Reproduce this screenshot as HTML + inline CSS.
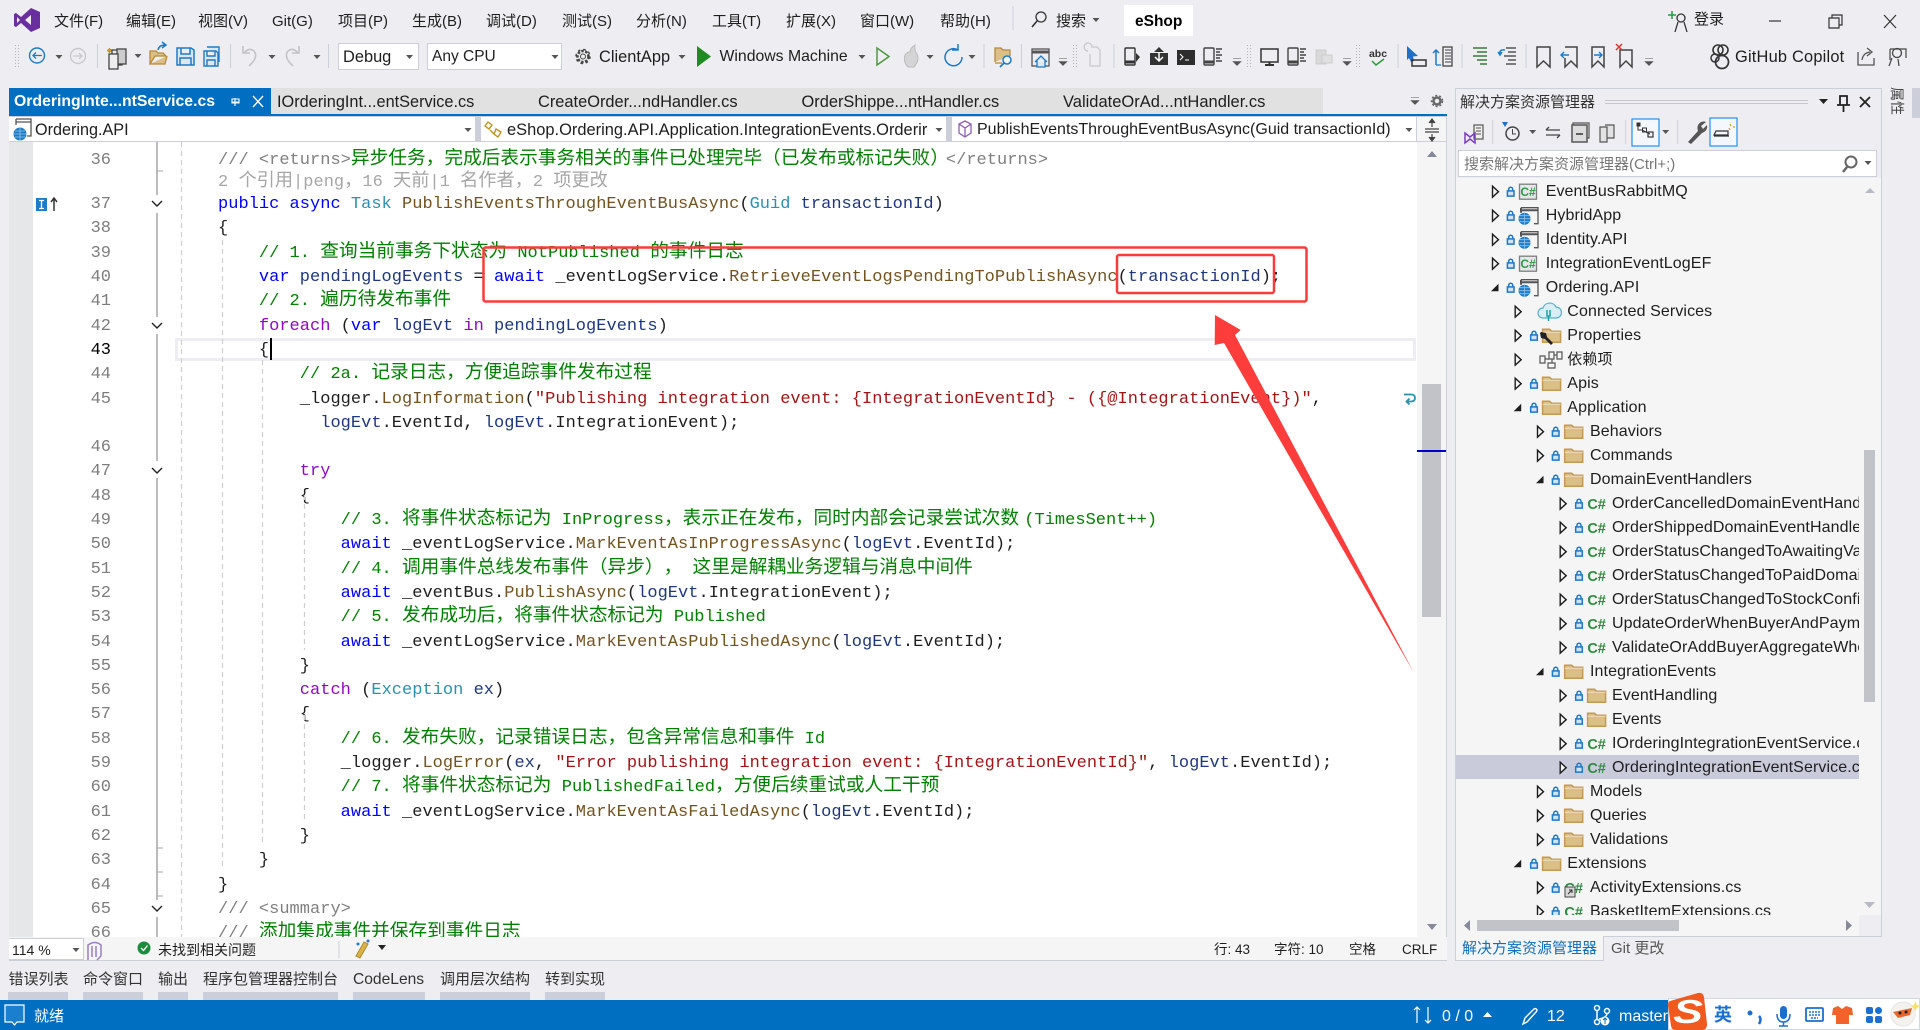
<!DOCTYPE html>
<html lang="zh"><head><meta charset="utf-8"><title>eShop - Visual Studio</title>
<style>
html,body{margin:0;padding:0;background:#eeeef2;width:1920px;height:1030px;overflow:hidden}
body{position:relative;font-family:"Liberation Sans","Noto Sans CJK SC",sans-serif;color:#1e1e1e;font-size:15px}
div{position:absolute;white-space:pre;box-sizing:border-box}
.t{line-height:24px;height:24px;margin-top:1px}
.lat{font-size:16.4px}
.bx{background:#fff;border:1px solid #ccced9}
.l{left:218px;height:24px;line-height:24px;margin-top:1.7px;font-family:"Liberation Mono","Noto Sans CJK SC",monospace;font-size:17px;letter-spacing:.02px;color:#1e1e1e;text-spacing-trim:space-all}
.n{left:70px;width:41px;text-align:right;height:24px;line-height:24px;margin-top:1.7px;font-family:"Liberation Mono",monospace;font-size:17px;color:#7d7d7d}
.l i{font-style:normal;font-family:"Noto Sans CJK SC",sans-serif;font-size:18.7px;line-height:0;letter-spacing:0;text-spacing-trim:space-all}
.e i{font-size:18.2px}
.g{color:#008000}.k{color:#0000ff}.p{color:#8f08c4}.y{color:#2b91af}.m{color:#74531f}.s{color:#a31515}.v{color:#1f377f}.d{color:#808080}.e{color:#a6a6a6}
.r{height:24px;line-height:24px;margin-top:.5px;font-size:16px;letter-spacing:.1px;color:#1e1e1e}
.b{background:#ccced9;top:992px;height:8px}
.w{color:#fff}
</style></head><body>

<!-- title + menu -->
<div class="t" style="left:54px;top:9px">文件(F)</div>
<div class="t" style="left:126px;top:9px">编辑(E)</div>
<div class="t" style="left:198px;top:9px">视图(V)</div>
<div class="t" style="left:272px;top:9px">Git(G)</div>
<div class="t" style="left:338px;top:9px">项目(P)</div>
<div class="t" style="left:412px;top:9px">生成(B)</div>
<div class="t" style="left:486px;top:9px">调试(D)</div>
<div class="t" style="left:562px;top:9px">测试(S)</div>
<div class="t" style="left:636px;top:9px">分析(N)</div>
<div class="t" style="left:712px;top:9px">工具(T)</div>
<div class="t" style="left:786px;top:9px">扩展(X)</div>
<div class="t" style="left:860px;top:9px">窗口(W)</div>
<div class="t" style="left:940px;top:9px">帮助(H)</div>
<div class="t" style="left:1056px;top:9px">搜索</div>
<div style="left:1124px;top:5px;width:69px;height:31px;background:#fff"></div>
<div class="t" style="left:1135px;top:9px;font-weight:bold;font-size:15.5px;color:#000">eShop</div>
<div class="t" style="left:1694px;top:7px">登录</div>

<!-- toolbar combos -->
<div class="bx" style="left:338px;top:43px;width:81px;height:27px"></div>
<div class="t lat" style="left:343px;top:44px">Debug</div>
<div class="bx" style="left:427px;top:43px;width:135px;height:27px"></div>
<div class="t" style="left:432px;top:44px;font-size:15.5px">Any CPU</div>
<div class="t lat" style="left:599px;top:44px">ClientApp</div>
<div class="t" style="left:719.5px;top:44px;font-size:15.8px">Windows Machine</div>
<div class="t lat" style="left:1735px;top:44px;letter-spacing:.2px">GitHub Copilot</div>

<!-- tabs -->
<div style="left:271px;top:88px;width:1052px;height:26px;background:#e1e1e1"></div>
<div style="left:9px;top:88px;width:262px;height:26px;background:#006fc1"></div>
<div style="left:9px;top:114px;width:1438px;height:2px;background:#006fc1"></div>
<div class="t w" style="left:14px;top:89px;font-weight:bold;font-size:15.8px">OrderingInte...ntService.cs</div>
<div class="t" style="left:277px;top:89px;font-size:16.3px">IOrderingInt...entService.cs</div>
<div class="t" style="left:538px;top:89px;font-size:16.4px">CreateOrder...ndHandler.cs</div>
<div class="t" style="left:801.5px;top:89px;font-size:16.4px">OrderShippe...ntHandler.cs</div>
<div class="t" style="left:1063px;top:89px;font-size:16.5px">ValidateOrAd...ntHandler.cs</div>

<!-- nav bar -->
<div style="left:9px;top:116px;width:1438px;height:26px;background:#ccced9"></div>
<div style="left:9px;top:117px;width:466px;height:24px;background:#fff"></div>
<div style="left:481px;top:117px;width:465px;height:24px;background:#fff"></div>
<div style="left:952px;top:117px;width:464px;height:24px;background:#fff"></div>
<div style="left:1417px;top:117px;width:30px;height:24px;background:#f5f5f5"></div>
<div class="t" style="left:35px;top:117px;font-size:16.2px">Ordering.API</div>
<div style="left:507px;top:118px;width:425px;height:24px;line-height:24px;overflow:hidden;font-size:16.45px">eShop.Ordering.API.Application.IntegrationEvents.Orderir</div>
<div class="t" style="left:977px;top:117px;font-size:16px">PublishEventsThroughEventBusAsync(Guid transactionId)</div>

<!-- editor -->
<div style="left:9px;top:142px;width:1408px;height:795px;background:#fff"></div>
<div style="left:9px;top:142px;width:24px;height:795px;background:#e6e7e8"></div>
<div style="left:1417px;top:142px;width:29px;height:795px;background:#f5f5f5"></div>
<div style="left:1446px;top:116px;width:1px;height:845px;background:#ccced9"></div>
<div style="left:1422px;top:384px;width:19px;height:233px;background:#c2c3c9"></div>
<div style="left:1417px;top:450px;width:29px;height:2px;background:#0000cd"></div>
<div style="left:175px;top:338px;width:1241px;height:23px;border:3px solid #eeeef2"></div>

<div style="left:0;top:0;width:1417px;height:937px;overflow:hidden">
<div class="n" style="top:147.3px">36</div>
<div class="n" style="top:191.5px">37</div>
<div class="n" style="top:215.8px">38</div>
<div class="n" style="top:240.1px">39</div>
<div class="n" style="top:264.4px">40</div>
<div class="n" style="top:288.7px">41</div>
<div class="n" style="top:313px">42</div>
<div class="n" style="top:337.3px;color:#000">43</div>
<div class="n" style="top:361.6px">44</div>
<div class="n" style="top:385.9px">45</div>
<div class="n" style="top:434.5px">46</div>
<div class="n" style="top:458.8px">47</div>
<div class="n" style="top:483.1px">48</div>
<div class="n" style="top:507.4px">49</div>
<div class="n" style="top:531.7px">50</div>
<div class="n" style="top:556px">51</div>
<div class="n" style="top:580.3px">52</div>
<div class="n" style="top:604.6px">53</div>
<div class="n" style="top:628.9px">54</div>
<div class="n" style="top:653.2px">55</div>
<div class="n" style="top:677.5px">56</div>
<div class="n" style="top:701.8px">57</div>
<div class="n" style="top:726.1px">58</div>
<div class="n" style="top:750.4px">59</div>
<div class="n" style="top:774.7px">60</div>
<div class="n" style="top:799px">61</div>
<div class="n" style="top:823.3px">62</div>
<div class="n" style="top:847.6px">63</div>
<div class="n" style="top:871.9px">64</div>
<div class="n" style="top:896.2px">65</div>
<div class="n" style="top:920.5px">66</div>

<div class="l" style="top:147.3px"><span class="d">/// &lt;returns&gt;</span><i class="g">异步任务，完成后表示事务相关的事件已处理完毕（已发布或标记失败）</i><span class="d" style="margin-left:-3px">&lt;/returns&gt;</span></div>
<div class="l e" style="top:169px">2 <i>个引用</i>|peng<i>，</i>16 <i>天前</i>|1 <i>名作者，</i>2 <i>项更改</i></div>
<div class="l" style="top:191.5px"><span class="k">public async </span><span class="y">Task </span><span class="m">PublishEventsThroughEventBusAsync</span>(<span class="y">Guid </span><span class="v">transactionId</span>)</div>
<div class="l" style="top:215.8px">{</div>
<div class="l g" style="top:240.1px">    // 1. <i>查询当前事务下状态为</i> NotPublished <i>的事件日志</i></div>
<div class="l" style="top:264.4px">    <span class="k">var </span><span class="v">pendingLogEvents</span> = <span class="k">await </span>_eventLogService.<span class="m">RetrieveEventLogsPendingToPublishAsync</span>(<span class="v">transactionId</span>);</div>
<div class="l g" style="top:288.7px">    // 2. <i>遍历待发布事件</i></div>
<div class="l" style="top:313px">    <span class="p">foreach </span>(<span class="k">var </span><span class="v">logEvt </span><span class="p">in </span><span class="v">pendingLogEvents</span>)</div>
<div class="l" style="top:337.3px">    {</div>
<div class="l g" style="top:361.6px">        // 2a. <i>记录日志，方便追踪事件发布过程</i></div>
<div class="l" style="top:385.9px">        _logger.<span class="m">LogInformation</span>(<span class="s">"Publishing integration event: {IntegrationEventId} - ({@IntegrationEvent})"</span>,</div>
<div class="l" style="top:410.2px">          <span class="v">logEvt</span>.EventId, <span class="v">logEvt</span>.IntegrationEvent);</div>
<div class="l" style="top:458.8px">        <span class="p">try</span></div>
<div class="l" style="top:483.1px">        {</div>
<div class="l g" style="top:507.4px">            // 3. <i>将事件状态标记为</i> InProgress<i>，表示正在发布，同时内部会记录尝试次数</i><span style="margin-left:-5px"> (TimesSent++)</span></div>
<div class="l" style="top:531.7px">            <span class="k">await </span>_eventLogService.<span class="m">MarkEventAsInProgressAsync</span>(<span class="v">logEvt</span>.EventId);</div>
<div class="l g" style="top:556px">            // 4. <i>调用事件总线发布事件（异步），</i> <i>这里是解耦业务逻辑与消息中间件</i></div>
<div class="l" style="top:580.3px">            <span class="k">await </span>_eventBus.<span class="m">PublishAsync</span>(<span class="v">logEvt</span>.IntegrationEvent);</div>
<div class="l g" style="top:604.6px">            // 5. <i>发布成功后，将事件状态标记为</i> Published</div>
<div class="l" style="top:628.9px">            <span class="k">await </span>_eventLogService.<span class="m">MarkEventAsPublishedAsync</span>(<span class="v">logEvt</span>.EventId);</div>
<div class="l" style="top:653.2px">        }</div>
<div class="l" style="top:677.5px">        <span class="p">catch </span>(<span class="y">Exception </span><span class="v">ex</span>)</div>
<div class="l" style="top:701.8px">        {</div>
<div class="l g" style="top:726.1px">            // 6. <i>发布失败，记录错误日志，包含异常信息和事件</i> Id</div>
<div class="l" style="top:750.4px">            _logger.<span class="m">LogError</span>(<span class="v">ex</span>, <span class="s">"Error publishing integration event: {IntegrationEventId}"</span>, <span class="v">logEvt</span>.EventId);</div>
<div class="l g" style="top:774.7px">            // 7. <i>将事件状态标记为</i> PublishedFailed<i>，方便后续重试或人工干预</i></div>
<div class="l" style="top:799px">            <span class="k">await </span>_eventLogService.<span class="m">MarkEventAsFailedAsync</span>(<span class="v">logEvt</span>.EventId);</div>
<div class="l" style="top:823.3px">        }</div>
<div class="l" style="top:847.6px">    }</div>
<div class="l" style="top:871.9px">}</div>
<div class="l d" style="top:896.2px">/// &lt;summary&gt;</div>
<div class="l" style="top:920.5px"><span class="d">/// </span><i class="g">添加集成事件并保存到事件日志</i></div>
</div>
<div style="left:270px;top:338px;width:1.5px;height:22px;background:#000"></div>

<!-- editor status -->
<div style="left:9px;top:937px;width:1438px;height:24px;background:#f5f5f5;border-bottom:1px solid #ccced9"></div>
<div style="left:9px;top:938px;width:75px;height:22px;background:#fff;border:1px solid #ccced9;border-left:0"></div>
<div class="t" style="left:12px;top:937px;font-size:14px">114 %</div>
<div class="t" style="left:158px;top:937px;font-size:14px">未找到相关问题</div>
<div class="t" style="left:1214px;top:937px;font-size:13.5px">行: 43</div>
<div class="t" style="left:1274px;top:937px;font-size:13.5px">字符: 10</div>
<div class="t" style="left:1349px;top:937px;font-size:13.5px">空格</div>
<div class="t" style="left:1402px;top:937px;font-size:13.5px">CRLF</div>

<!-- bottom tool tabs -->
<div class="t" style="left:8.5px;top:967px;color:#333">错误列表</div><div class="b" style="left:8px;width:60px"></div>
<div class="t" style="left:83px;top:967px;color:#333">命令窗口</div><div class="b" style="left:83px;width:60px"></div>
<div class="t" style="left:158px;top:967px;color:#333">输出</div><div class="b" style="left:158px;width:30px"></div>
<div class="t" style="left:203px;top:967px;color:#333">程序包管理器控制台</div><div class="b" style="left:203px;width:135px"></div>
<div class="t" style="left:353px;top:967px;color:#333;font-size:15.6px">CodeLens</div><div class="b" style="left:353px;width:72px"></div>
<div class="t" style="left:440px;top:967px;color:#333">调用层次结构</div><div class="b" style="left:440px;width:90px"></div>
<div class="t" style="left:545px;top:967px;color:#333">转到实现</div><div class="b" style="left:545px;width:60px"></div>

<!-- status bar -->
<div style="left:0;top:1000px;width:1920px;height:30px;background:#006fc1"></div>
<div class="t w" style="left:34px;top:1004px">就绪</div>
<div class="t w" style="left:1442px;top:1004px;font-size:16px">0 / 0</div>
<div class="t w" style="left:1547px;top:1004px;font-size:16px">12</div>
<div class="t w" style="left:1619px;top:1004px;font-size:16px">master</div>
<div style="left:1668px;top:998px;width:252px;height:32px;background:#fff;border:1px solid #cfd8e4"></div>
<div class="t" style="left:1714px;top:1002px;font-size:18px;font-weight:bold;color:#1a6fd0">英</div>

<!-- solution explorer -->
<div style="left:1455px;top:88px;width:427px;height:849px;border:1px solid #ccced9;background:#eeeef2"></div>
<div class="t" style="left:1460px;top:90px;color:#333">解决方案资源管理器</div>
<div style="left:1456px;top:178px;width:425px;height:758px;background:#f5f5f5"></div>
<div style="left:1458px;top:150px;width:419px;height:27px;background:#fff;border:1px solid #ccced9"></div>
<div class="t" style="left:1464px;top:152px;color:#777">搜索解决方案资源管理器(Ctrl+;)</div>
<div style="left:1864px;top:450px;width:11px;height:252px;background:#c2c3c9"></div>
<div style="left:1859px;top:915px;width:22px;height:21px;background:#eeeef2"></div>
<div style="left:1477px;top:920px;width:202px;height:11px;background:#c2c3c9"></div>

<div style="left:1456px;top:178px;width:403px;height:737px;overflow:hidden">
<div style="left:-1456px;top:-178px;width:1920px;height:1030px">
<div style="left:1456px;top:755px;width:403px;height:24px;background:#c9cbdb"></div>
<div class="r" style="left:1545.7px;top:179.7px">EventBusRabbitMQ</div>
<div class="r" style="left:1545.7px;top:203.7px">HybridApp</div>
<div class="r" style="left:1545.7px;top:227.7px">Identity.API</div>
<div class="r" style="left:1545.7px;top:251.7px">IntegrationEventLogEF</div>
<div class="r" style="left:1545.7px;top:275.7px">Ordering.API</div>
<div class="r" style="left:1567.3px;top:299.7px">Connected Services</div>
<div class="r" style="left:1567.3px;top:323.7px">Properties</div>
<div class="r" style="left:1567.3px;top:347.7px;font-size:15px">依赖项</div>
<div class="r" style="left:1567.3px;top:371.7px">Apis</div>
<div class="r" style="left:1567.3px;top:395.7px">Application</div>
<div class="r" style="left:1590px;top:419.7px">Behaviors</div>
<div class="r" style="left:1590px;top:443.7px">Commands</div>
<div class="r" style="left:1590px;top:467.7px">DomainEventHandlers</div>
<div class="r" style="left:1612px;top:491.7px">OrderCancelledDomainEventHandler.cs</div>
<div class="r" style="left:1612px;top:515.7px">OrderShippedDomainEventHandler.cs</div>
<div class="r" style="left:1612px;top:539.7px">OrderStatusChangedToAwaitingValidation</div>
<div class="r" style="left:1612px;top:563.7px">OrderStatusChangedToPaidDomainEvent</div>
<div class="r" style="left:1612px;top:587.7px">OrderStatusChangedToStockConfirmed</div>
<div class="r" style="left:1612px;top:611.7px">UpdateOrderWhenBuyerAndPaymentMethod</div>
<div class="r" style="left:1612px;top:635.7px">ValidateOrAddBuyerAggregateWhenOrder</div>
<div class="r" style="left:1590px;top:659.7px">IntegrationEvents</div>
<div class="r" style="left:1612px;top:683.7px">EventHandling</div>
<div class="r" style="left:1612px;top:707.7px">Events</div>
<div class="r" style="left:1612px;top:731.7px">IOrderingIntegrationEventService.cs</div>
<div class="r" style="left:1612px;top:755.7px">OrderingIntegrationEventService.cs</div>
<div class="r" style="left:1590px;top:779.7px">Models</div>
<div class="r" style="left:1590px;top:803.7px">Queries</div>
<div class="r" style="left:1590px;top:827.7px">Validations</div>
<div class="r" style="left:1567.3px;top:851.7px">Extensions</div>
<div class="r" style="left:1590px;top:875.7px">ActivityExtensions.cs</div>
<div class="r" style="left:1590px;top:899.7px">BasketItemExtensions.cs</div>

<svg width="1920" height="1030" style="position:absolute;left:0;top:0">
<defs>
<path id="ex" d="M-2.5,-5.5L3.5,0L-2.5,5.5Z" fill="#f5f5f5" stroke="#1e1e1e" stroke-width="1.4"/>
<path id="op" d="M3.5,-4V3.5H-4Z" fill="#1e1e1e"/>
<g id="lk" fill="none" stroke="#1b78c8" stroke-width="1.5"><rect x="-3.3" y="-0.8" width="6.6" height="5.2" fill="#cfe3f5"/><path d="M-2,-0.8V-2.5A2,2 0 0 1 2,-2.5V-0.8"/></g>
<g id="fd"><path d="M-9,-6.5H-2L0,-4.5H9V6.5H-9Z" fill="#dcbf84" stroke="#c49a52" stroke-width="1.5"/><path d="M-9,-3.5H9" stroke="#efe0bd" stroke-width="1"/></g>
<g id="web"><path d="M-7,-8H10V8H6" fill="none" stroke="#555" stroke-width="1.3"/><path d="M-7,-8V-3M-7,-5.500H10" stroke="#555" stroke-width="2" fill="none"/><circle cx="-3.5" cy="3" r="6" fill="#1c7cc8"/><path d="M-9.5,3H2.5M-3.5,-3V9M-8.5,0H1.5M-8.5,6H1.5" stroke="#8fc3ea" stroke-width=".8"/></g>
<g id="prj"><rect x="-8.5" y="-7.5" width="17" height="15" fill="#e4e6e8" stroke="#7c7f7f" stroke-width="1.3"/><text x="0" y="4.5" text-anchor="middle" font-family="Liberation Sans" font-size="12" font-weight="bold" fill="#2c9a3e">C#</text></g>
<g id="cs"><text x="0" y="5.5" text-anchor="middle" font-family="Liberation Sans" font-size="14.5" font-weight="bold" fill="#2e8b3e">C#</text></g>
</defs>
<g><use href="#ex" x="1495" y="191.7"/><use href="#lk" x="1510.7" y="191.7"/><use href="#prj" x="1528" y="191.7"/>
<use href="#ex" x="1495" y="215.7"/><use href="#lk" x="1510.7" y="215.7"/><use href="#web" x="1528" y="215.7"/>
<use href="#ex" x="1495" y="239.7"/><use href="#lk" x="1510.7" y="239.7"/><use href="#web" x="1528" y="239.7"/>
<use href="#ex" x="1495" y="263.7"/><use href="#lk" x="1510.7" y="263.7"/><use href="#prj" x="1528" y="263.7"/>
<use href="#op" x="1495" y="287.7"/><use href="#lk" x="1510.7" y="287.7"/><use href="#web" x="1528" y="287.7"/>
<use href="#ex" x="1517.7" y="311.7"/>
<g transform="translate(-5 0)"><path d="M1548,318a5,5 0 0 1 0,-10a7,7 0 0 1 13,-1a5.500,5.500 0 0 1 0,11Z" fill="#d8eef5" stroke="#5ab0c8" stroke-width="1.2"/><path d="M1552,310v6h3v-6M1553.500,316v5" stroke="#1aa0a8" stroke-width="1.500" fill="none"/></g>
<use href="#ex" x="1517.7" y="335.7"/><use href="#lk" x="1534" y="335.7"/><use href="#fd" x="1551.6" y="335.7"/>
<path d="M1541,332l5,1 1,4 6,6 -2,2 -6,-6 -4,-1 -1,-5Z" fill="#222"/>
<use href="#ex" x="1517.7" y="359.7"/>
<g transform="translate(-3 0)"><path d="M1543,356h5v7h-5ZM1552,352h5v7h-5ZM1560,352h5v7h-5ZM1551,363h7v5h-7Z" fill="none" stroke="#555" stroke-width="1.2"/><path d="M1548,359h4M1557,355h3M1555,359v4" stroke="#555" stroke-width="1.2"/></g>
<use href="#ex" x="1517.7" y="383.7"/><use href="#lk" x="1534" y="383.7"/><use href="#fd" x="1551.6" y="383.7"/>
<use href="#op" x="1517.7" y="407.7"/><use href="#lk" x="1534" y="407.7"/><use href="#fd" x="1551.6" y="407.7"/>
<use href="#ex" x="1540" y="431.7"/><use href="#lk" x="1555.7" y="431.7"/><use href="#fd" x="1573.7" y="431.7"/>
<use href="#ex" x="1540" y="455.7"/><use href="#lk" x="1555.7" y="455.7"/><use href="#fd" x="1573.7" y="455.7"/>
<use href="#op" x="1540" y="479.7"/><use href="#lk" x="1555.7" y="479.7"/><use href="#fd" x="1573.7" y="479.7"/>
<use href="#ex" x="1562.7" y="503.7"/><use href="#lk" x="1579" y="503.7"/><use href="#cs" x="1596.600" y="503.7"/>
<use href="#ex" x="1562.7" y="527.7"/><use href="#lk" x="1579" y="527.7"/><use href="#cs" x="1596.600" y="527.7"/>
<use href="#ex" x="1562.7" y="551.7"/><use href="#lk" x="1579" y="551.7"/><use href="#cs" x="1596.600" y="551.7"/>
<use href="#ex" x="1562.7" y="575.7"/><use href="#lk" x="1579" y="575.7"/><use href="#cs" x="1596.600" y="575.7"/>
<use href="#ex" x="1562.7" y="599.7"/><use href="#lk" x="1579" y="599.7"/><use href="#cs" x="1596.600" y="599.7"/>
<use href="#ex" x="1562.7" y="623.7"/><use href="#lk" x="1579" y="623.7"/><use href="#cs" x="1596.600" y="623.7"/>
<use href="#ex" x="1562.7" y="647.7"/><use href="#lk" x="1579" y="647.7"/><use href="#cs" x="1596.600" y="647.7"/>
<use href="#op" x="1540" y="671.7"/><use href="#lk" x="1555.7" y="671.7"/><use href="#fd" x="1573.7" y="671.7"/>
<use href="#ex" x="1562.7" y="695.7"/><use href="#lk" x="1579" y="695.7"/><use href="#fd" x="1596.600" y="695.7"/>
<use href="#ex" x="1562.7" y="719.7"/><use href="#lk" x="1579" y="719.7"/><use href="#fd" x="1596.600" y="719.7"/>
<use href="#ex" x="1562.7" y="743.7"/><use href="#lk" x="1579" y="743.7"/><use href="#cs" x="1596.600" y="743.7"/>
<use href="#ex" x="1562.7" y="767.7"/><use href="#lk" x="1579" y="767.7"/><use href="#cs" x="1596.600" y="767.7"/>
<use href="#ex" x="1540" y="791.7"/><use href="#lk" x="1555.7" y="791.7"/><use href="#fd" x="1573.7" y="791.7"/>
<use href="#ex" x="1540" y="815.7"/><use href="#lk" x="1555.7" y="815.7"/><use href="#fd" x="1573.7" y="815.7"/>
<use href="#ex" x="1540" y="839.7"/><use href="#lk" x="1555.7" y="839.7"/><use href="#fd" x="1573.7" y="839.7"/>
<use href="#op" x="1517.7" y="863.7"/><use href="#lk" x="1534" y="863.7"/><use href="#fd" x="1551.6" y="863.7"/>
<use href="#ex" x="1540" y="887.7"/><use href="#lk" x="1555.7" y="887.7"/><use href="#cs" x="1573.7" y="887.7"/><rect x="1565" y="887" width="10" height="10" fill="#d8d8d8" stroke="#444"/><path d="M1568,894l4,-4M1569,890h3v3" stroke="#333" fill="none"/>
<use href="#ex" x="1540" y="911.7"/><use href="#lk" x="1555.7" y="911.7"/><use href="#cs" x="1573.7" y="911.7"/></g>
</svg>
</div></div>

<div style="left:1455px;top:936px;width:149px;height:25px;background:#f5f5f5;border:1px solid #ccced9;border-top:0"></div>
<div class="t" style="left:1462px;top:936px;color:#0e70c0">解决方案资源管理器</div>
<div class="t" style="left:1611px;top:936px;color:#555">Git 更改</div>

<!-- right sidebar -->
<div style="left:1912px;top:88px;width:8px;height:30px;background:#ccced9"></div>
<div style="left:1888px;top:87px;width:18px;height:32px;overflow:hidden;writing-mode:vertical-rl;text-orientation:sideways;font-size:14px;line-height:18px;color:#444">属性</div>

<!-- vector overlay -->
<svg width="1920" height="1030" style="position:absolute;left:0;top:0">
<defs><path id="dd" d="M-3.500,-2H3.500L0,2Z" fill="#555"/>
<path id="dl" d="M-4,-3.5H4M-4,-.5H4L0,3.500Z" fill="#555" stroke="#555" stroke-width=".6"/>
<path id="gr" d="M-1.500,-11V11M1.500,-11V11" stroke="#b4b4b8" stroke-dasharray="1 2" fill="none"/></defs>

<!-- VS logo -->
<path d="M31,8L40,12V28L31,32L21,23L16,27L14,26V14L16,13L21,17Z" fill="#6a2f9e"/><path d="M17,17L20,20L17,23ZM31,15L25,20L31,25Z" fill="#eeeef2"/>
<!-- menu extras -->
<path d="M1013,6V30" stroke="#ccced9"/>
<circle cx="1041" cy="17" r="5" fill="none" stroke="#333" stroke-width="1.300"/><path d="M1037,21L1032,27" stroke="#333" stroke-width="1.600"/>
<use href="#dd" x="1096" y="20"/>
<path d="M1672,11V19M1668,15H1676" stroke="#2a9a3a" stroke-width="1.500"/><circle cx="1681" cy="18" r="4" fill="none" stroke="#333" stroke-width="1.300"/><path d="M1675,32L1678,22M1687,32L1684,22" stroke="#333" stroke-width="1.300"/>
<path d="M1769,21H1781" stroke="#333" stroke-width="1.200"/>
<path d="M1829,18H1839V28H1829ZM1832,18V15H1842V25H1839" fill="none" stroke="#333" stroke-width="1.200"/>
<path d="M1884,15L1896,28M1896,15L1884,28" stroke="#333" stroke-width="1.200"/>

<!-- toolbar left -->
<use href="#gr" x="17" y="56"/>
<circle cx="37" cy="55.500" r="7.500" fill="none" stroke="#1e7ac6" stroke-width="1.400"/><path d="M42,55.500H33M36,52.500L33,55.500L36,58.500" fill="none" stroke="#1e7ac6" stroke-width="1.300"/>
<use href="#dd" x="59" y="57"/>
<circle cx="78" cy="56" r="7.500" fill="none" stroke="#c9c9cd" stroke-width="1.400"/><path d="M73,56H82M79,53L82,56L79,59" fill="none" stroke="#c9c9cd" stroke-width="1.300"/>
<path d="M97.500,44V68M230.500,44V68M328.500,44V68M984,44V68M1021.500,44V68M1114,44V68M1398,44V68M1462,44V68M1526,44V68" stroke="#ccced9"/>
<path d="M108,49l3,3m0,-3l-3,3m1.500,-4v5m-2.500,-2.500h5" stroke="#c99a1c" stroke-width="1.200"/><rect x="112" y="50" width="10" height="15" fill="#eee" stroke="#444" stroke-width="1.300"/><rect x="117" y="49" width="9" height="15" fill="#ccc" stroke="#444" stroke-width="1.300"/><rect x="109" y="54" width="9" height="15" fill="#eee" stroke="#444" stroke-width="1.300"/>
<use href="#dd" x="138" y="56"/>
<path d="M150,64V51H156L158,53H163L166,56H155L150,64H165L167,56" fill="#dcbf84" stroke="#b8893a" stroke-width="1.300"/><path d="M158,50Q159,45 165,45M162,42L166,45L162,48" fill="none" stroke="#1e7ac6" stroke-width="1.500"/>
<path d="M177,48H191L194,50V65H177ZM181,48V54H190V48M180,65V58H191V65" fill="#dbe8f4" stroke="#1e7ac6" stroke-width="1.500"/>
<path d="M207,47H219V62M204,51H216L218,53V66H204ZM207,51V56H215V51M207,66V60H215V66" fill="#dbe8f4" stroke="#1e7ac6" stroke-width="1.400"/>
<path d="M243,46V53H250M244,53Q249,47 254,51Q258,56 252,63L249,66" fill="none" stroke="#c4c4c8" stroke-width="1.600"/>
<use href="#dd" x="272" y="57"/>
<path d="M299,46V53H292M298,53Q293,47 288,51Q284,56 290,63L293,66" fill="none" stroke="#c4c4c8" stroke-width="1.600"/>
<use href="#dd" x="317" y="57"/>
<use href="#dd" x="409.500" y="57"/><use href="#dd" x="555" y="57"/>
<!-- gear -->
<circle cx="583" cy="56.500" r="5.500" fill="none" stroke="#444" stroke-width="2.500" stroke-dasharray="2.500 1.500"/><circle cx="583" cy="56.500" r="7" fill="none" stroke="#444" stroke-width="1.500" stroke-dasharray="2.500 3"/><circle cx="583" cy="56.500" r="2.500" fill="none" stroke="#444"/>
<use href="#dd" x="682" y="57"/>
<path d="M697,46L711,56.500L697,67Z" fill="#218a24"/>
<use href="#dd" x="862" y="57"/>
<path d="M877,48L889,56.500L877,65Z" fill="none" stroke="#4f9a3f" stroke-width="1.500"/>
<path d="M908,67Q903,62 905,55Q907,52 910,52Q910,48 915,45Q914,50 917,54Q920,60 914,67Z" fill="#d4d4d6" stroke="#bbb"/>
<use href="#dd" x="930" y="57"/>
<path d="M958,50A8.500,8.500 0 1 0 962,57M958,44V50H952" fill="none" stroke="#1e7ac6" stroke-width="1.500"/>
<use href="#dd" x="972" y="57"/>
<!-- toolbar right -->
<path d="M995,62V48H1001L1003,50H1010V56" fill="#dcbf84" stroke="#b8893a" stroke-width="1.300"/><path d="M995,63H1002" stroke="#b8893a" stroke-width="1.300"/><circle cx="1007" cy="60" r="4" fill="#eef5fb" stroke="#1e7ac6" stroke-width="1.500"/><path d="M1004,63L1000,67" stroke="#1e7ac6" stroke-width="1.700"/>
<rect x="1032" y="49" width="17" height="17" fill="none" stroke="#555" stroke-width="1.300"/><path d="M1032,52H1049" stroke="#555" stroke-width="3"/><path d="M1035,62L1041,56L1047,62M1037,60V67H1045V60" fill="#dbe8f4" stroke="#1e7ac6" stroke-width="1.300"/>
<use href="#dl" x="1063" y="62"/><use href="#gr" x="1075" y="56"/>
<path d="M1091,47H1097L1100,50V66H1090V54" fill="none" stroke="#c9c9cd" stroke-width="1.300"/><path d="M1092,46A4,4 0 1 0 1088,51" fill="none" stroke="#c9c9cd" stroke-width="1.300"/>
<rect x="1125" y="48" width="10" height="17" rx="1" fill="none" stroke="#333" stroke-width="1.400"/><path d="M1136,53L1140,57L1136,62Z" fill="#333"/><path d="M1125,62H1135" stroke="#333" stroke-width="3"/>
<path d="M1150,53H1168V65H1150ZM1154,52L1159,47L1164,52" fill="#333"/><path d="M1159,52V61M1155,57L1159,61L1163,57" stroke="#fff" stroke-width="1.500" fill="none"/>
<rect x="1177" y="50" width="18" height="15" fill="#2d2d2d"/><path d="M1180,54L1183,57L1180,60M1185,60H1189" stroke="#fff" fill="none"/>
<rect x="1204" y="48" width="10" height="17" rx="1" fill="none" stroke="#444" stroke-width="1.400"/><path d="M1204,62H1214" stroke="#444" stroke-width="3"/><path d="M1216,49H1222M1216,52H1220M1216,55H1222M1216,58H1220M1216,61H1222" stroke="#444" stroke-width="1.500"/>
<use href="#dl" x="1237" y="62"/><use href="#gr" x="1249" y="56"/>
<rect x="1261" y="49" width="17" height="13" fill="none" stroke="#333" stroke-width="1.500"/><path d="M1265,65H1274M1269.500,62V65" stroke="#333" stroke-width="2"/>
<rect x="1288" y="48" width="10" height="17" rx="1" fill="none" stroke="#444" stroke-width="1.400"/><path d="M1288,62H1298" stroke="#444" stroke-width="3"/><path d="M1300,49H1306M1300,52H1304M1300,55H1306M1300,58H1304M1300,61H1306" stroke="#444" stroke-width="1.500"/>
<path d="M1316,50H1326V64H1316Z" fill="#d8d8da" stroke="#ccc"/><rect x="1322" y="55" width="10" height="8" fill="#e0e0e2" stroke="#ccc"/>
<use href="#dl" x="1347" y="62"/><use href="#gr" x="1358" y="56"/>
<text x="1378" y="57" text-anchor="middle" font-family="Liberation Sans" font-size="10.500" font-weight="bold" fill="#333">abc</text><path d="M1372,61L1376,65L1384,59" fill="none" stroke="#2a9a3a" stroke-width="1.500"/>
<path d="M1407,46L1418,56L1413,56.500L1414,61L1411,62L1409,58L1407,60Z" fill="#1e6fc8"/><rect x="1412" y="60" width="14" height="6" fill="none" stroke="#333" stroke-width="1.500"/>
<path d="M1436,65V50M1433,53L1436,50L1439,53" fill="none" stroke="#1e7ac6" stroke-width="1.500"/><path d="M1436,65H1441" stroke="#1e7ac6" stroke-width="1.300"/><rect x="1443" y="47" width="9" height="19" fill="none" stroke="#444" stroke-width="1.300"/><path d="M1445,50H1451M1445,53H1451M1445,56H1451M1445,59H1451M1445,62H1451" stroke="#444"/>
<path d="M1473,48H1487M1477,52H1487M1473,56H1487M1477,60H1487M1480,64H1487" stroke="#3a7a3a" stroke-width="1.400"/>
<path d="M1505,50Q1499,49 1500,54M1498,52L1500,55L1502,52" fill="none" stroke="#1e7ac6" stroke-width="1.500"/><path d="M1506,48H1516M1508,52H1516M1504,56H1516M1508,60H1516M1506,64H1516" stroke="#555" stroke-width="1.400"/>
<path d="M1537,47H1550V67L1543.500,61L1537,67Z" fill="none" stroke="#444" stroke-width="1.500"/>
<path d="M1565,47H1577V67L1571,61L1565,67V58" fill="none" stroke="#444" stroke-width="1.500"/><path d="M1569,55H1561M1564,52L1561,55L1564,58" fill="none" stroke="#1e7ac6" stroke-width="1.400"/>
<path d="M1592,47H1604V67L1598,61L1592,67Z" fill="none" stroke="#444" stroke-width="1.500"/><path d="M1594,55H1602M1599,52L1602,55L1599,58" fill="none" stroke="#1e7ac6" stroke-width="1.400"/>
<path d="M1620,50H1632V67L1626,61L1620,67Z" fill="none" stroke="#444" stroke-width="1.500"/><path d="M1616,44L1622,50M1622,44L1616,50" stroke="#d33" stroke-width="1.500"/>
<use href="#dl" x="1649" y="62"/>
<circle cx="1718" cy="50" r="5" fill="none" stroke="#333" stroke-width="1.600"/><circle cx="1723" cy="50" r="5" fill="none" stroke="#333" stroke-width="1.600"/><circle cx="1722" cy="62" r="6.500" fill="none" stroke="#333" stroke-width="1.700"/><circle cx="1715" cy="58" r="4" fill="none" stroke="#333" stroke-width="1.500"/>
<path d="M1858,52V65H1874V58M1862,60Q1863,53 1870,52M1867,48L1872,52L1867,56" fill="none" stroke="#555" stroke-width="1.300"/>
<circle cx="1897" cy="53" r="4.500" fill="none" stroke="#444" stroke-width="1.300"/><path d="M1890,49H1906V58M1890,49V60M1889,66L1892,58M1899,66L1898,59" fill="none" stroke="#444" stroke-width="1.200"/>

<!-- tab row icons -->
<path d="M229,101H236M232,97V105M229,98H236V102H229Z" stroke="#fff" fill="none" transform="translate(3 1)" stroke-width="1.100"/>
<path d="M253,96L263,107M263,96L253,107" stroke="#fff" stroke-width="1.400"/>
<use href="#dl" x="1415" y="101"/>
<circle cx="1437" cy="101" r="3.500" fill="none" stroke="#666" stroke-width="2.500"/><circle cx="1437" cy="101" r="5.500" fill="none" stroke="#666" stroke-width="1.500" stroke-dasharray="2 2"/>
<!-- nav icons -->
<path d="M16,119H31V136H27M16,122H31M16,119V125" fill="none" stroke="#555" stroke-width="1.300"/><circle cx="20" cy="134" r="6.500" fill="#1c7cc8"/><path d="M13.500,134H26.500M20,127.500V140.500M15,131H25M15,137H25" stroke="#8fc3ea" stroke-width=".8"/>
<use href="#dd" x="468" y="130"/>
<path d="M488,122l4,3 -3,4 -4,-3ZM496,129l5,3 -3,5 -4,-3ZM490,130l5,5" fill="none" stroke="#c2921e" stroke-width="1.400"/>
<use href="#dd" x="939" y="130"/>
<path d="M960,121L966,124V133L960,137L954,133V124ZM954,124L960,128L966,124M960,128V137" fill="none" stroke="#8e5fb8" stroke-width="1.300" transform="translate(5 0)"/>
<use href="#dd" x="1409" y="130"/>
<path d="M1425,129H1439M1425,132H1439M1432,119V127M1429,123L1432,119L1435,123M1432,134V141M1429,137L1432,141L1435,137" stroke="#444" fill="#444" stroke-width="1.200"/>

<!-- scroll arrows -->
<path d="M1427,157L1432,151L1437,157Z" fill="#868999"/>
<path d="M1427,924H1437L1432,930Z" fill="#868999"/>
<path d="M1865,193L1870,188L1875,193Z" fill="#b8b9c4"/><path d="M1864,902H1875L1869.500,908Z" fill="#b8b9c4"/>
<path d="M1470,920V931L1464,925.500Z" fill="#868999"/><path d="M1846,920V931L1852,925.500Z" fill="#868999"/>

<!-- outlining margin -->
<path d="M157,142V195M157,213V317M157,334V461M157,478V900M157,917V937" stroke="#a5a5a5" stroke-width="1.500"/>
<path d="M157,171H163M157,848H163M157,872H163M157,896H163" stroke="#a5a5a5"/>
<path d="M152,201L157,206L162,201M152,323L157,328L162,323M152,468L157,473L162,468M152,906L157,911L162,906" fill="none" stroke="#222" stroke-width="1.400"/>
<g stroke="#cfcfcf" stroke-width="1.200" stroke-dasharray="5 4"><path d="M181.500,142V937"/><path d="M222.500,240V870"/><path d="M262.500,360V846"/><path d="M304.500,495V650M304.500,715V820"/></g>
<!-- info margin icon -->
<rect x="36" y="198" width="11" height="13" fill="#1c7cc8"/><path d="M39,200.500H44M39,208.500H44M41.500,200.500V208.500" stroke="#fff" stroke-width="1.300"/><path d="M54,211V199M51,202L54,198L57,202" fill="none" stroke="#333" stroke-width="1.500"/>
<path d="M1404,394.500H1411Q1415,394.500 1415,398Q1415,401.500 1411,401.500H1407M1409.500,398.500L1406.500,401.500L1409.500,404.500" fill="none" stroke="#2b91af" stroke-width="1.800"/>

<!-- status strip icons -->
<use href="#dd" x="76" y="950"/>
<path d="M88,960V945Q95,940 101,945V956L97,960M92,946V957M96,946V957" fill="none" stroke="#9a7fc8" stroke-width="1.500"/>
<circle cx="144" cy="948" r="6.500" fill="#1e8a3c"/><path d="M141,948L143.500,950.500L147.500,945.500" fill="none" stroke="#fff" stroke-width="1.400"/>
<path d="M339,941V958" stroke="#ccced9"/>
<path d="M368,944L360,958L356,956L364,942Z" fill="#d9b24a" stroke="#b08a2a"/><circle cx="368" cy="941" r="1.500" fill="#1e7ac6"/><circle cx="358" cy="944" r="1.500" fill="#1e7ac6"/>
<path d="M378,945H386L382,950Z" fill="#222"/>

<!-- SE title icons -->
<g fill="#c6c7ce"><rect x="1605" y="100" width="203" height="1"/><rect x="1605" y="103" width="203" height="1"/></g>
<path d="M1819,99H1828L1823.500,104Z" fill="#222"/>
<path d="M1840,96H1847V100V105H1840ZM1837,105H1850M1843.500,105V112" fill="none" stroke="#222" stroke-width="1.800" />
<path d="M1860,97L1870,107M1870,97L1860,107" stroke="#222" stroke-width="1.800"/>
<!-- SE toolbar -->
<path d="M1492.700,120V144M1625.700,120V144M1677.700,120V144" stroke="#ccced9"/>
<rect x="1474" y="125" width="9" height="14" fill="#eee" stroke="#555" stroke-width="1.200"/><path d="M1476,128H1481M1476,131H1481M1476,134H1481" stroke="#555"/><path d="M1465,133L1470,137L1475,133V143L1470,139L1465,143Z" fill="none" stroke="#7c3bc8" stroke-width="1.500"/>
<path d="M1502,122H1508L1505,127Z" fill="#1e6fc8"/><circle cx="1512.500" cy="133.500" r="6.500" fill="none" stroke="#444" stroke-width="1.500"/><path d="M1512.500,129V134H1516" fill="none" stroke="#444"/>
<use href="#dd" x="1532.700" y="132"/>
<path d="M1546,130H1560M1549,127L1546,130M1560,135H1546M1557,138L1560,135" fill="none" stroke="#444" stroke-width="1.300"/>
<rect x="1572" y="125" width="15" height="17" fill="#ddd" stroke="#555" stroke-width="1.500"/><path d="M1576,134H1583" stroke="#333" stroke-width="1.500"/><path d="M1573,125V123H1589V138H1587" stroke="#555" fill="none" stroke-width="1.200"/>
<path d="M1600,127H1607V142H1600ZM1605,125H1614V138H1607" fill="#e2e2e2" stroke="#555" stroke-width="1.200"/>
<rect x="1632" y="119" width="27" height="27" fill="#f4f8fc" stroke="#1e90ee" stroke-width="1.200"/><path d="M1638,124V130H1642L1650,134M1638,124" fill="none" stroke="#333"/><rect x="1636.500" y="122.500" width="4" height="4" fill="#333"/><rect x="1648" y="132" width="5" height="5" fill="none" stroke="#333" stroke-width="1.200"/><rect x="1642.500" y="128" width="4" height="4" fill="none" stroke="#333"/>
<use href="#dd" x="1665.700" y="132"/>
<path d="M1688,142L1698,131Q1696,125 1701,122Q1704,121 1706,122L1701,126L1703,129L1707,125Q1708,131 1702,133L1691,144Z" fill="#555"/>
<rect x="1710" y="118" width="27" height="28" fill="#f4f8fc" stroke="#1e90ee" stroke-width="1.200"/><path d="M1714,135H1728V131H1716ZM1714,136H1729" fill="none" stroke="#333" stroke-width="1.200"/><path d="M1729,128L1730,130M1733,127H1735M1731,126L1730,124" stroke="#d59b1c" stroke-width="1.200"/>
<circle cx="1851" cy="162" r="5.500" fill="none" stroke="#666" stroke-width="2"/><path d="M1847,167L1843,172" stroke="#666" stroke-width="2.500"/>
<use href="#dd" x="1868" y="163"/>

<!-- status bar icons -->
<path d="M5,1005H24V1022H17L14.500,1025L12,1022H5Z" fill="#1b7fd0" stroke="#fff" stroke-width="1.200"/>
<path d="M1417,1023V1007M1414,1010L1417,1007L1420,1010M1428,1007V1023M1425,1020L1428,1023L1431,1020" stroke="#fff" fill="none" stroke-width="1.200"/>
<path d="M1483,1017L1487.500,1012L1492,1017Z" fill="#fff"/>
<path d="M1523,1024L1525,1018L1534,1009Q1536,1008 1537,1010Q1537,1011 1536,1012L1527,1022Z" fill="none" stroke="#fff" stroke-width="1.400"/>
<g fill="none" stroke="#fff" stroke-width="1.500"><circle cx="1597" cy="1008" r="2.500"/><circle cx="1607" cy="1011" r="2.500"/><circle cx="1597" cy="1022" r="2.500"/><path d="M1597,1011V1019M1607,1014Q1606,1018 1599,1019"/></g><circle cx="1605" cy="1021" r="4.500" fill="#fff"/><path d="M1605,1024V1018M1603,1020L1605,1018L1607,1020" stroke="#006fc1" fill="none"/>

<!-- sogou IME -->
<path d="M1670,1001L1698,993Q1703,992 1704,997L1707,1024Q1707,1030 1702,1030H1675Q1672,1030 1671,1026L1668,1005Q1668,1002 1670,1001Z" fill="#f05a1e"/>
<text transform="translate(1688 1023) scale(1.35 1)" text-anchor="middle" font-family="Liberation Sans" font-size="33" font-weight="bold" font-style="italic" fill="#fff">S</text>
<circle cx="1750" cy="1013" r="2.500" fill="#1a6fd0"/><path d="M1759,1016Q1762,1019 1759,1024" fill="none" stroke="#1a6fd0" stroke-width="2.500"/>
<rect x="1780" y="1006" width="7" height="13" rx="3.500" fill="#1a6fd0"/><path d="M1777,1014Q1777,1022 1783.500,1022Q1790,1022 1790,1014M1783.500,1022V1026M1779,1026H1788" fill="none" stroke="#1a6fd0" stroke-width="1.500"/>
<rect x="1806" y="1008" width="17" height="13" rx="1" fill="none" stroke="#1a6fd0" stroke-width="1.800"/><path d="M1809,1012H1820M1809,1015H1820M1811,1018H1818" stroke="#1a6fd0" stroke-width="1.500" stroke-dasharray="2 1"/>
<path d="M1833,1008L1838,1006L1842,1009L1846,1006L1852,1008L1853,1015H1849V1024H1836V1015H1832Z" fill="#f2622a"/>
<rect x="1866" y="1007" width="7" height="7" rx="2" fill="#1a6fd0"/><rect x="1875" y="1007" width="7" height="7" rx="3.500" fill="#1a6fd0"/><rect x="1866" y="1016" width="7" height="7" rx="2" fill="#1a6fd0"/><rect x="1875" y="1016" width="7" height="7" rx="2" fill="#1a6fd0"/>
<circle cx="1903" cy="1014" r="12" fill="#f4f2ee" stroke="#e5e5e5"/><path d="M1893,1012L1912,1008L1910,1015L1898,1018Z" fill="#e8672c"/><circle cx="1900" cy="1013" r="1.500" fill="#222"/><circle cx="1906" cy="1012" r="1.500" fill="#222"/>
<path d="M1915,1001L1917,1005L1920,1006L1917,1008L1915,1011L1914,1008L1911,1006L1914,1005Z" fill="#f4e26a"/>

<!-- red annotations -->
<rect x="483.500" y="247.500" width="823" height="54" rx="2" fill="none" stroke="#fb3b3b" stroke-width="2.500"/>
<rect x="1117" y="255" width="157" height="38" rx="2" fill="none" stroke="#fb3b3b" stroke-width="2.500"/>
<path d="M1215,315L1240.700,330L1235,335L1414,673L1224,343L1214.700,345Z" fill="#fd3c3c"/>
</svg>
</body></html>
